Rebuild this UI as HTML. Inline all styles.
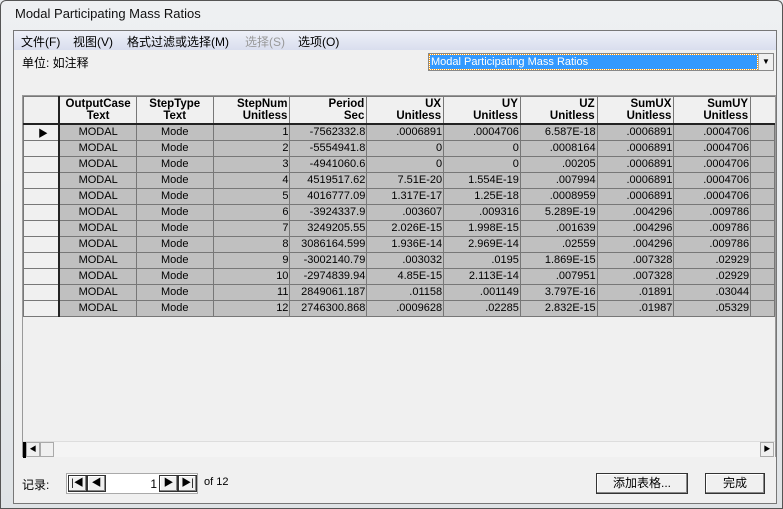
<!DOCTYPE html>
<html><head><meta charset="utf-8"><style>
*{margin:0;padding:0;box-sizing:border-box}
body{width:783px;height:509px;overflow:hidden;background:#e9ecef;font-family:"Liberation Sans","Noto Sans CJK SC",sans-serif;position:relative}
.frame{position:absolute;left:0;top:0;width:783px;height:509px;background:linear-gradient(#eef0f2,#dfe3e6);border:1px solid #555;border-radius:6px 6px 0 0}
.title{position:absolute;left:15px;top:6px;font-size:13px;color:#111}
.client{position:absolute;left:13px;top:30px;width:764px;height:474px;background:#f0f0f0;border:1px solid #777}
.menu{position:absolute;left:0;top:0;width:762px;height:19px;background:linear-gradient(#eef0f8,#d9deee);font-size:12px;color:#000}
.menu span{position:absolute;top:2px}
.abs{position:absolute}
.grid{position:absolute;left:8px;top:64px;width:754px;height:362px;background:#f0f0f0;border:1px solid #999}
table{border-collapse:collapse;font-size:11px;position:absolute;left:0;top:0}
td{height:16px;border:1px solid #777;padding:0 1px;text-align:right;background:#c0c0c0;white-space:nowrap;overflow:hidden}
th{height:27px;border:1px solid #777;border-bottom:2px solid #222;font-weight:bold;font-size:11.5px;line-height:12px;text-align:right;background:#f0f0f0;padding:0 2px}
td.c{text-align:center}
td.s{background:#f0f0f0;border-right:2px solid #222}
.btn{position:absolute;background:#f0f0f0;border:1px solid #333;box-shadow:inset -1px -1px #888,inset 1px 1px #fff;font-size:12px;text-align:center}
</style></head><body>
<div class="frame"></div>
<div class="title">Modal Participating Mass Ratios</div>
<div class="client">
<div class="menu"><span style="left:7px">文件(F)</span><span style="left:59px">视图(V)</span><span style="left:113px">格式过滤或选择(M)</span><span style="left:231px;color:#999">选择(S)</span><span style="left:284px">选项(O)</span></div>
<div class="abs" style="left:8px;top:23px;font-size:12px">单位: 如注释</div>
<div class="abs" style="left:414px;top:22px;width:346px;height:18px;border:1px solid #888;background:#fff">
 <div class="abs" style="left:1px;top:1px;width:327px;height:14px;background:#3399ff;outline:1px dotted #f90;color:#fff;font-size:11px;line-height:14px;padding-left:1px">Modal Participating Mass Ratios</div>
 <div class="abs" style="left:329px;top:0;width:15px;height:16px;background:#f0f0f0;border-left:1px solid #aaa;font-size:8px;text-align:center;line-height:16px">▼</div>
</div>
<div class="grid">
<table>
<tr><th style="width:36px;border-right:2px solid #222"></th><th style="width:77px;text-align:center">OutputCase<br>Text</th><th style="width:77px;text-align:center">StepType<br>Text</th><th style="width:77px">StepNum<br>Unitless</th><th style="width:77px">Period<br>Sec</th><th style="width:77px">UX<br>Unitless</th><th style="width:77px">UY<br>Unitless</th><th style="width:77px">UZ<br>Unitless</th><th style="width:77px">SumUX<br>Unitless</th><th style="width:77px">SumUY<br>Unitless</th><th style="width:24px;border-right:none"></th></tr>
<tr><td class="s" style="text-align:left;padding-left:14px;font-size:10px">▶</td><td class="c">MODAL</td><td class="c">Mode</td><td>1</td><td>-7562332.8</td><td>.0006891</td><td>.0004706</td><td>6.587E-18</td><td>.0006891</td><td>.0004706</td><td></td></tr>
<tr><td class="s"></td><td class="c">MODAL</td><td class="c">Mode</td><td>2</td><td>-5554941.8</td><td>0</td><td>0</td><td>.0008164</td><td>.0006891</td><td>.0004706</td><td></td></tr>
<tr><td class="s"></td><td class="c">MODAL</td><td class="c">Mode</td><td>3</td><td>-4941060.6</td><td>0</td><td>0</td><td>.00205</td><td>.0006891</td><td>.0004706</td><td></td></tr>
<tr><td class="s"></td><td class="c">MODAL</td><td class="c">Mode</td><td>4</td><td>4519517.62</td><td>7.51E-20</td><td>1.554E-19</td><td>.007994</td><td>.0006891</td><td>.0004706</td><td></td></tr>
<tr><td class="s"></td><td class="c">MODAL</td><td class="c">Mode</td><td>5</td><td>4016777.09</td><td>1.317E-17</td><td>1.25E-18</td><td>.0008959</td><td>.0006891</td><td>.0004706</td><td></td></tr>
<tr><td class="s"></td><td class="c">MODAL</td><td class="c">Mode</td><td>6</td><td>-3924337.9</td><td>.003607</td><td>.009316</td><td>5.289E-19</td><td>.004296</td><td>.009786</td><td></td></tr>
<tr><td class="s"></td><td class="c">MODAL</td><td class="c">Mode</td><td>7</td><td>3249205.55</td><td>2.026E-15</td><td>1.998E-15</td><td>.001639</td><td>.004296</td><td>.009786</td><td></td></tr>
<tr><td class="s"></td><td class="c">MODAL</td><td class="c">Mode</td><td>8</td><td>3086164.599</td><td>1.936E-14</td><td>2.969E-14</td><td>.02559</td><td>.004296</td><td>.009786</td><td></td></tr>
<tr><td class="s"></td><td class="c">MODAL</td><td class="c">Mode</td><td>9</td><td>-3002140.79</td><td>.003032</td><td>.0195</td><td>1.869E-15</td><td>.007328</td><td>.02929</td><td></td></tr>
<tr><td class="s"></td><td class="c">MODAL</td><td class="c">Mode</td><td>10</td><td>-2974839.94</td><td>4.85E-15</td><td>2.113E-14</td><td>.007951</td><td>.007328</td><td>.02929</td><td></td></tr>
<tr><td class="s"></td><td class="c">MODAL</td><td class="c">Mode</td><td>11</td><td>2849061.187</td><td>.01158</td><td>.001149</td><td>3.797E-16</td><td>.01891</td><td>.03044</td><td></td></tr>
<tr><td class="s"></td><td class="c">MODAL</td><td class="c">Mode</td><td>12</td><td>2746300.868</td><td>.0009628</td><td>.02285</td><td>2.832E-15</td><td>.01987</td><td>.05329</td><td></td></tr>
</table>
<div class="abs" style="left:0;top:345px;width:752px;height:16px;background:#f4f4f4;border-top:1px solid #ddd">
 <div class="abs" style="left:0;top:0;width:3px;height:16px;background:#000"></div>
 <div class="abs" style="left:3px;top:0;width:14px;height:15px;background:#f0f0f0;border:1px solid #aaa;font-size:7px;text-align:center;line-height:14px">◀</div>
 <div class="abs" style="left:17px;top:0;width:14px;height:15px;background:#f0f0f0;border:1px solid #aaa"></div>
 <div class="abs" style="left:737px;top:0;width:14px;height:15px;background:#f0f0f0;border:1px solid #aaa;font-size:7px;text-align:center;line-height:14px">▶</div>
</div>
</div>
<div class="abs" style="left:8px;top:445px;font-size:12px">记录:</div>
<div class="abs" style="left:52px;top:442px;width:132px;height:21px;border:1px solid #aaa;background:#fff">
 <div class="btn" style="left:1px;top:1px;width:19px;height:17px;font-size:10px;line-height:16px">|◀</div>
 <div class="btn" style="left:20px;top:1px;width:19px;height:17px;font-size:10px;line-height:16px">◀</div>
 <div class="abs" style="left:42px;top:3px;width:48px;text-align:right;font-size:12px">1</div>
 <div class="btn" style="left:92px;top:1px;width:19px;height:17px;font-size:10px;line-height:16px">▶</div>
 <div class="btn" style="left:111px;top:1px;width:19px;height:17px;font-size:10px;line-height:16px">▶|</div>
</div>
<div class="abs" style="left:190px;top:445px;font-size:11px">of 12</div>
<div class="btn" style="left:582px;top:442px;width:92px;height:21px;line-height:19px">添加表格...</div>
<div class="btn" style="left:691px;top:442px;width:60px;height:21px;line-height:19px">完成</div>
</div>
</body></html>
